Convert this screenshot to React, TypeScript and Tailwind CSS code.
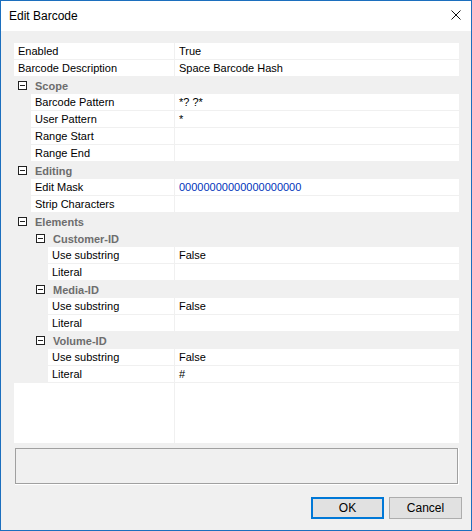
import { Fragment } from 'react'

type Row =
  | { kind: 'prop'; depth: 0 | 1 | 2; label: string; value?: string; changed?: boolean }
  | { kind: 'cat'; depth: 0 | 1; label: string }

const rows: Row[] = [
  { kind: 'prop', depth: 0, label: 'Enabled', value: 'True' },
  { kind: 'prop', depth: 0, label: 'Barcode Description', value: 'Space Barcode Hash' },
  { kind: 'cat', depth: 0, label: 'Scope' },
  { kind: 'prop', depth: 1, label: 'Barcode Pattern', value: '*? ?*' },
  { kind: 'prop', depth: 1, label: 'User Pattern', value: '*' },
  { kind: 'prop', depth: 1, label: 'Range Start' },
  { kind: 'prop', depth: 1, label: 'Range End' },
  { kind: 'cat', depth: 0, label: 'Editing' },
  { kind: 'prop', depth: 1, label: 'Edit Mask', value: '00000000000000000000', changed: true },
  { kind: 'prop', depth: 1, label: 'Strip Characters' },
  { kind: 'cat', depth: 0, label: 'Elements' },
  { kind: 'cat', depth: 1, label: 'Customer-ID' },
  { kind: 'prop', depth: 2, label: 'Use substring', value: 'False' },
  { kind: 'prop', depth: 2, label: 'Literal' },
  { kind: 'cat', depth: 1, label: 'Media-ID' },
  { kind: 'prop', depth: 2, label: 'Use substring', value: 'False' },
  { kind: 'prop', depth: 2, label: 'Literal' },
  { kind: 'cat', depth: 1, label: 'Volume-ID' },
  { kind: 'prop', depth: 2, label: 'Use substring', value: 'False' },
  { kind: 'prop', depth: 2, label: 'Literal', value: '#' },
]

const indent = ['w-0', 'w-[17px]', 'w-[34px]']
const catPad = ['pl-[4px]', 'pl-[22px]']

function MinusBox() {
  return (
    <span className="flex h-[9px] w-[9px] items-center justify-center border border-[#222] bg-white">
      <span className="h-px w-[5px] bg-[#222]" />
    </span>
  )
}

function GridRow({ row }: { row: Row }) {
  if (row.kind === 'cat') {
    return (
      <div className={`flex h-[17px] items-center bg-[#f0f0f0] ${catPad[row.depth]}`}>
        <MinusBox />
        <span className="ml-[8px] pt-[1px] font-bold leading-[16px] text-[#6d6d6d]">{row.label}</span>
      </div>
    )
  }
  return (
    <div className="flex h-[17px] border-b border-[#f0f0f0] bg-white">
      <div className={`shrink-0 bg-[#f0f0f0] ${indent[row.depth]}`} />
      <div className="flex-1 truncate pl-[4px] leading-[17px] text-black">{row.label}</div>
      <div
        className={`w-[285px] shrink-0 border-l border-[#f0f0f0] pl-[4px] leading-[17px] ${
          row.changed ? 'text-[#0033bb]' : 'text-black'
        }`}
      >
        {row.value ?? ''}
      </div>
    </div>
  )
}

export default function App() {
  return (
    <div className="flex h-[531px] w-[472px] flex-col border border-[#1c6fbe] bg-[#f0f0f0] font-['Liberation_Sans',Arial,sans-serif] text-[11px]">
      <div className="relative flex h-[30px] shrink-0 items-center bg-white pl-[8px] font-['Segoe_UI','Liberation_Sans',sans-serif] text-[12px] text-black">
        Edit Barcode
        <svg className="absolute left-[450px] top-[9px]" width="10" height="10" viewBox="0 0 10 10">
          <path d="M0.5 0.5 L9.5 9.5 M9.5 0.5 L0.5 9.5" stroke="#111" strokeWidth="1" fill="none" />
        </svg>
      </div>

      <div className="ml-[13px] mt-[12px] w-[445px]">
        {rows.map((r, i) => (
          <Fragment key={i}>
            <GridRow row={r} />
          </Fragment>
        ))}
        <div className="flex h-[60px] bg-white">
          <div className="w-[160px] shrink-0" />
          <div className="flex-1 border-l border-[#f0f0f0]" />
        </div>
      </div>

      <div className="ml-[14px] mt-[5px] w-[444px] border-b border-r border-white">
        <div className="h-[36px] border border-[#a0a0a0]" />
      </div>

      <div className="mt-[12px] flex justify-end gap-[5px] pr-[9px] text-[12px]">
        <button className="h-[22px] w-[73px] border-2 border-[#0078d7] bg-[#e1e1e1] text-black">OK</button>
        <button className="h-[22px] w-[73px] border border-[#adadad] bg-[#e1e1e1] text-black">Cancel</button>
      </div>
    </div>
  )
}
